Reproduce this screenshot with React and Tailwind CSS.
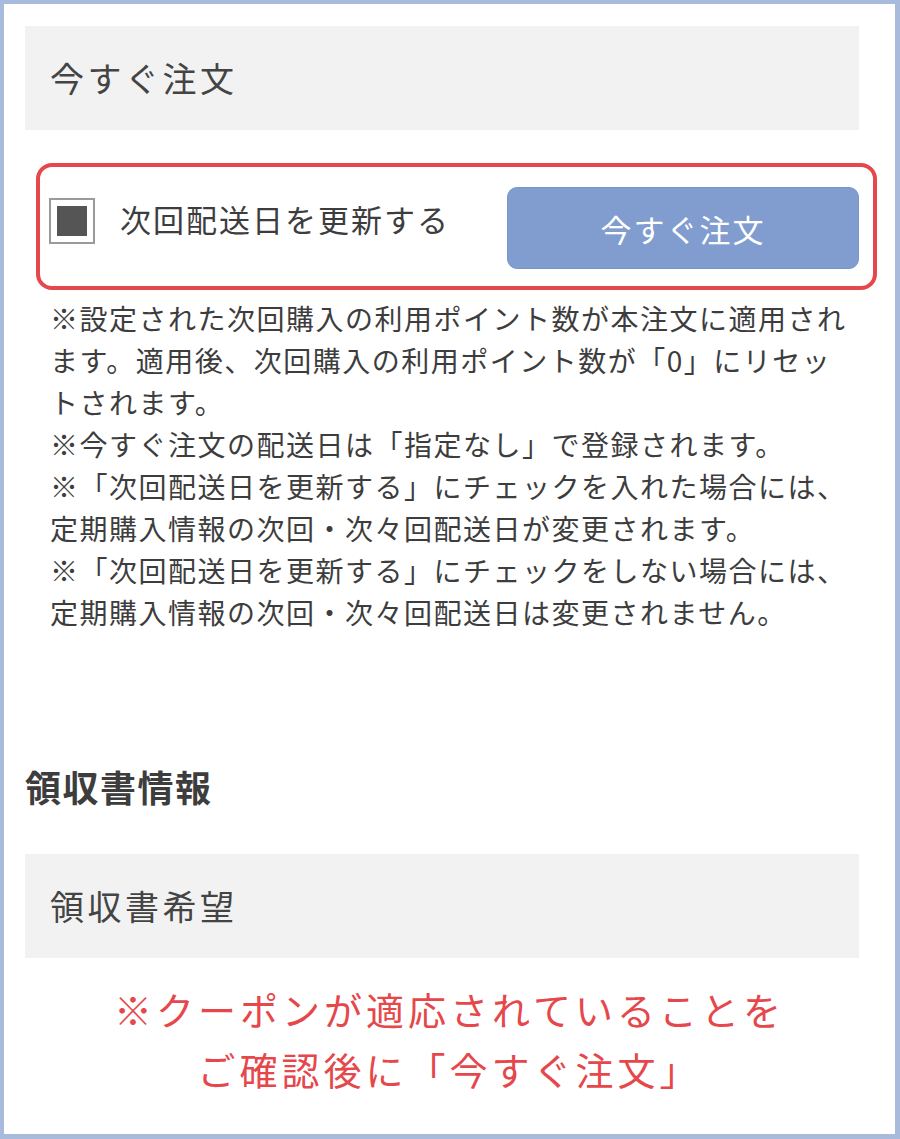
const font = { fontFamily: '"Noto Sans CJK JP", "Noto Sans", sans-serif' };

const notes = [
  ['※設定された次回購入の利用ポイント数が本注文に適用され', 'ます。適用後、次回購入の利用ポイント数が「0」にリセッ', 'トされます。'],
  ['※今すぐ注文の配送日は「指定なし」で登録されます。'],
  ['※「次回配送日を更新する」にチェックを入れた場合には、', '定期購入情報の次回・次々回配送日が変更されます。'],
  ['※「次回配送日を更新する」にチェックをしない場合には、', '定期購入情報の次回・次々回配送日は変更されません。'],
];

const GrayHeading = ({ children, className = '' }) => (
  <div className={`w-[834px] h-[104px] bg-[#f2f2f2] flex items-center pl-[25px] ${className}`}>
    <span className="text-[34px] tracking-[3.5px] text-[#444] leading-none">{children}</span>
  </div>
);

export default function App() {
  return (
    <div className="w-[900px] h-[1139px] bg-[#a9bbdc] pt-[4px] pl-[4px] pr-[5px] pb-[5px]" style={font}>
      <div className="h-full bg-white pl-[21px] pt-[22px]">
        <GrayHeading>今すぐ注文</GrayHeading>

        {/* order box */}
        <div className="mt-[33px] ml-[11px] w-[841px] h-[127px] border-[4px] border-[#e5474b] rounded-[16px] flex items-start justify-between pt-[20px] pl-[9px] pr-[14px]">
          <label className="flex items-center gap-[25px] mt-[11px]">
            <span className="w-[46px] h-[46px] border-2 border-[#9a9a9a] bg-white p-[6px] flex">
              <span className="flex-1 bg-[#555]" />
            </span>
            <span className="text-[31px] tracking-[2px] text-[#3d3d3d] leading-none -mt-[6px]">次回配送日を更新する</span>
          </label>
          <button className="w-[352px] h-[82px] rounded-[10px] bg-[#819dd0] border border-[#7a95c8] text-white text-[31px] tracking-[2px] pt-[2px]">
            今すぐ注文
          </button>
        </div>

        <div className="mt-[7px] pl-[25px] text-[28px] tracking-[1.5px] leading-[42px] text-[#3d3d3d] whitespace-nowrap">
          {notes.map((lines, i) => (
            <p key={i}>
              {lines.map((l, j) => (
                <span key={j} className="block">{l}</span>
              ))}
            </p>
          ))}
        </div>

        <h2 className="mt-[129px] text-[36px] font-bold tracking-[1.5px] leading-[48px] text-[#3d3d3d]">領収書情報</h2>

        <GrayHeading className="mt-[44px]">領収書希望</GrayHeading>

        <p className="mt-[21px] -ml-[21px] text-center text-[38px] tracking-[4px] leading-[60px] text-[#e5474b]">
          ※クーポンが適応されていることを
          <br />
          ご確認後に「今すぐ注文」
        </p>
      </div>
    </div>
  );
}
